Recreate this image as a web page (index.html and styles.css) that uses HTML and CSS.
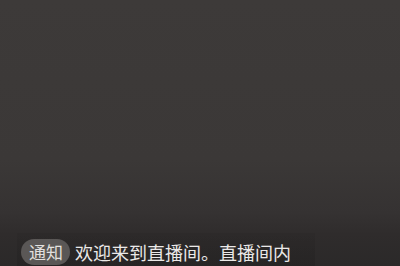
FILE: index.html
```html
<!DOCTYPE html>
<html lang="zh">
<head>
<meta charset="utf-8">
<link rel="stylesheet" href="styles.css">
</head>
<body>
<div class="stage">
  <div class="chat">
    <div class="msg">
      <span class="tag">通知</span>
      <span class="text">欢迎来到直播间。直播间内</span>
    </div>
  </div>
</div>
</body>
</html>
```
FILE: styles.css
```css
html, body {
  margin: 0;
  padding: 0;
}
body {
  width: 400px;
  height: 266px;
  overflow: hidden;
  font-family: "Noto Sans CJK SC", "Noto Sans", sans-serif;
}
.stage {
  height: 266px;
  display: flex;
  flex-direction: column;
  justify-content: flex-end;
  background: linear-gradient(180deg, #3d3a39 0%, #3b3837 60%, #353232 80%, #2f2c2c 88%, #2b2929 100%);
}
.chat {
  margin-left: 17px;
  width: 298px;
  height: 33px;
  background: linear-gradient(180deg, rgba(30,28,28,0.12), rgba(30,28,28,0.35));
  display: flex;
  align-items: flex-end;
}
.msg {
  display: flex;
  align-items: center;
  gap: 5px;
  padding-left: 4px;
  height: 26px;
  margin-bottom: 1px;
}
.tag {
  background: #5a5756;
  color: #e2e0df;
  font-size: 17px;
  line-height: 26px;
  height: 26px;
  padding: 0 7px 0 8px;
  border-radius: 13px;
}
.text {
  color: #ebe9e8;
  font-size: 18px;
  line-height: 26px;
}
```
